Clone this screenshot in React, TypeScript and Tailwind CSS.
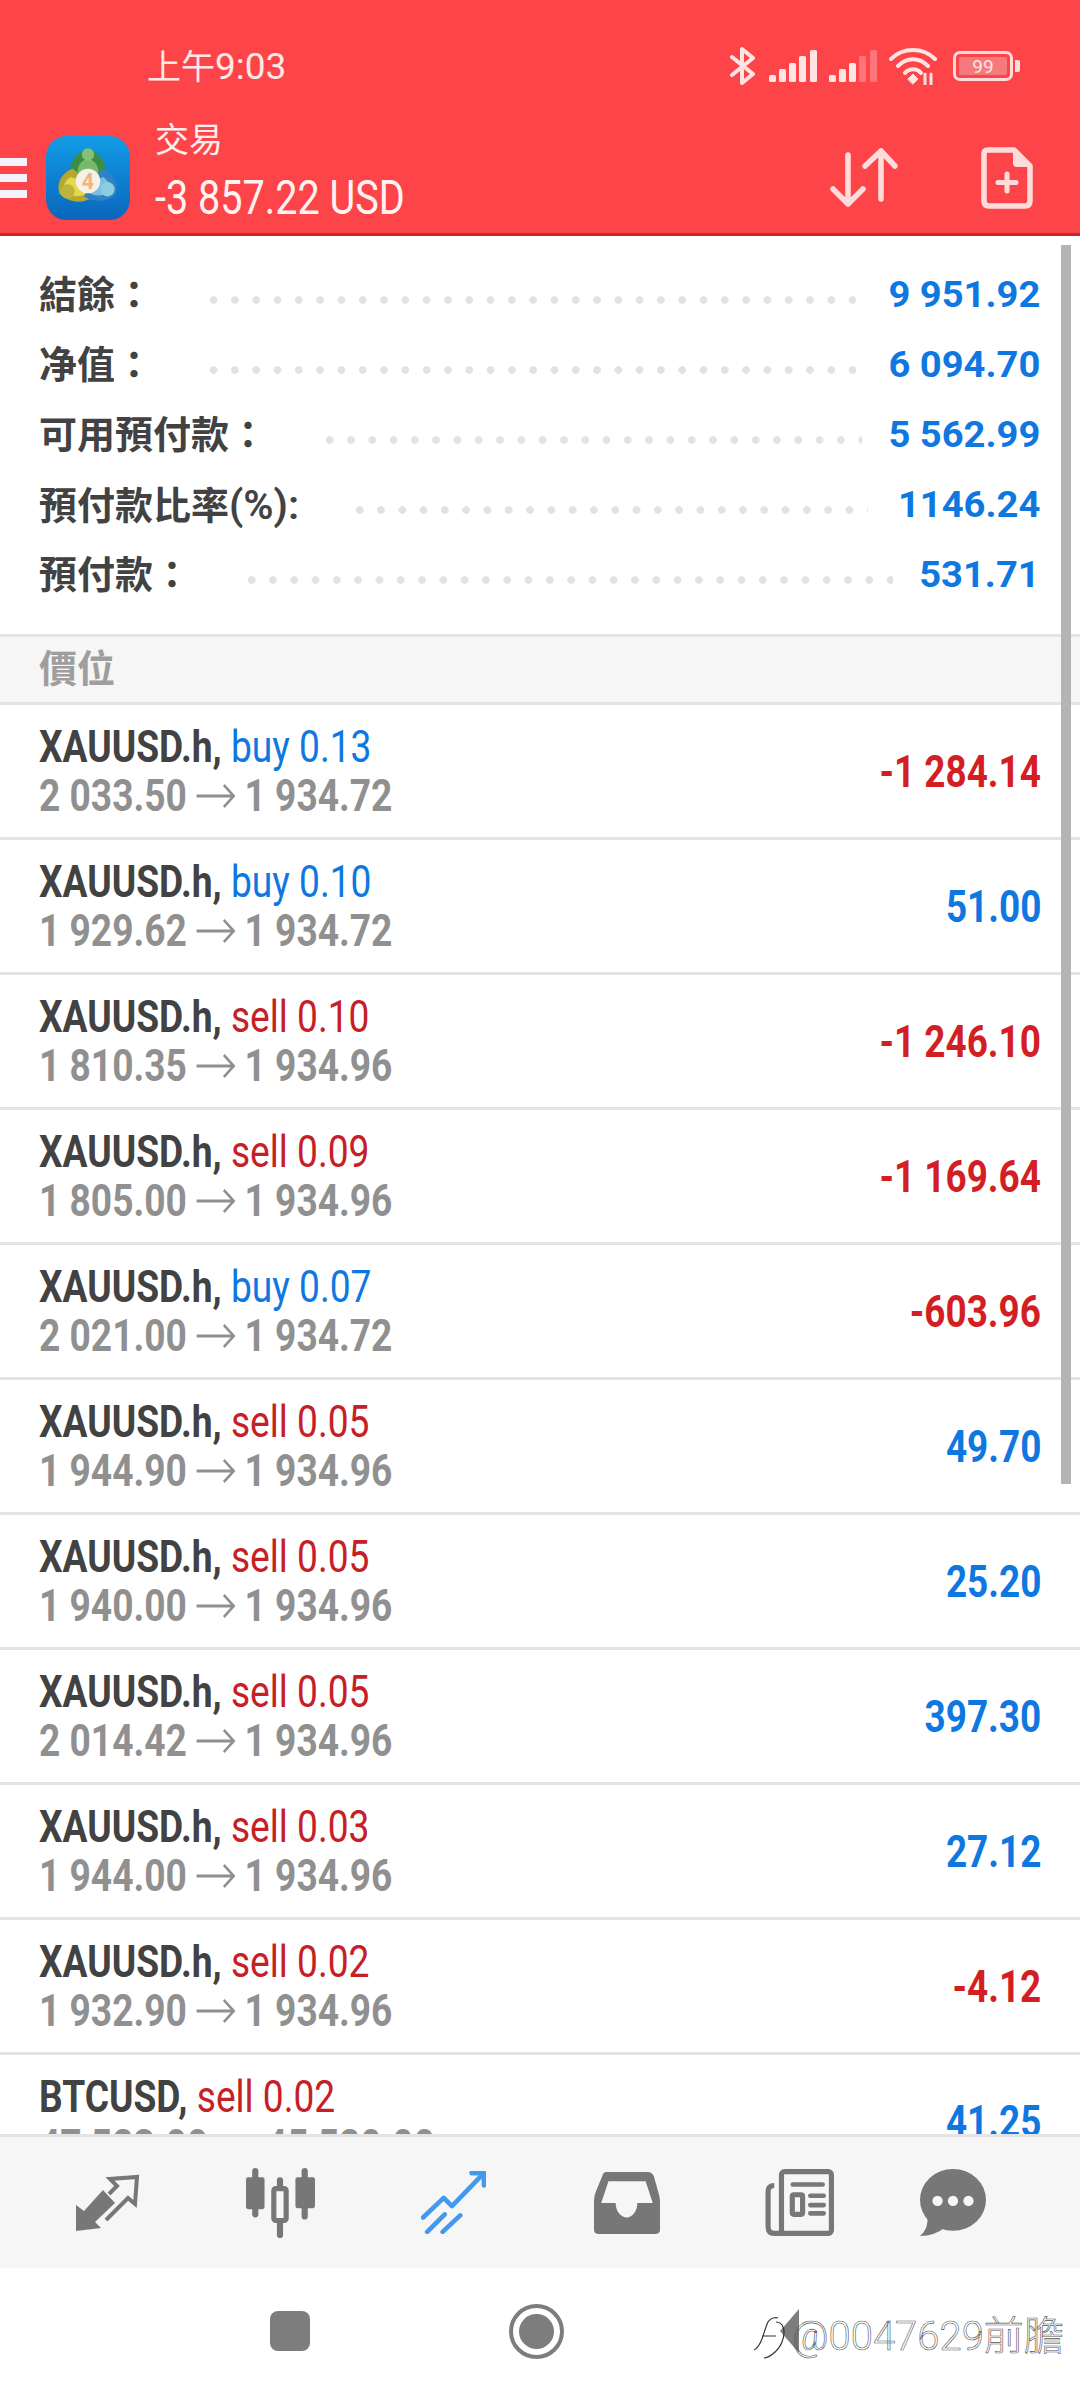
const font = "font-['Roboto','Noto_Sans_CJK_TC',sans-serif]";

const summary = [
  { label: "結餘：", value: "9 951.92", left: "ml-[50px]", right: "mr-[41px]" },
  { label: "净值：", value: "6 094.70", left: "ml-[50px]", right: "mr-[41px]" },
  { label: "可用預付款：", value: "5 562.99", left: "ml-[52px]", right: "mr-[35px]" },
  { label: "預付款比率", suffix: "(%):", value: "1146.24", left: "ml-[50px]", right: "mr-[38px]" },
  { label: "預付款：", value: "531.71", left: "ml-[50px]", right: "mr-[33px]" },
];

const positions = [
  { sym: "XAUUSD.h,", side: "buy", vol: "0.13", from: "2 033.50", to: "1 934.72", pl: "-1 284.14" },
  { sym: "XAUUSD.h,", side: "buy", vol: "0.10", from: "1 929.62", to: "1 934.72", pl: "51.00" },
  { sym: "XAUUSD.h,", side: "sell", vol: "0.10", from: "1 810.35", to: "1 934.96", pl: "-1 246.10" },
  { sym: "XAUUSD.h,", side: "sell", vol: "0.09", from: "1 805.00", to: "1 934.96", pl: "-1 169.64" },
  { sym: "XAUUSD.h,", side: "buy", vol: "0.07", from: "2 021.00", to: "1 934.72", pl: "-603.96" },
  { sym: "XAUUSD.h,", side: "sell", vol: "0.05", from: "1 944.90", to: "1 934.96", pl: "49.70" },
  { sym: "XAUUSD.h,", side: "sell", vol: "0.05", from: "1 940.00", to: "1 934.96", pl: "25.20" },
  { sym: "XAUUSD.h,", side: "sell", vol: "0.05", from: "2 014.42", to: "1 934.96", pl: "397.30" },
  { sym: "XAUUSD.h,", side: "sell", vol: "0.03", from: "1 944.00", to: "1 934.96", pl: "27.12" },
  { sym: "XAUUSD.h,", side: "sell", vol: "0.02", from: "1 932.90", to: "1 934.96", pl: "-4.12" },
  { sym: "BTCUSD,", side: "sell", vol: "0.02", from: "47 523.00", to: "45 520.00", pl: "41.25" },
];

function SignalBars({ faded }: { faded?: boolean }) {
  return (
    <svg width="48" height="32" viewBox="0 0 48 32" fill="#ffe4e4">
      <rect x="0" y="25" width="7" height="7" rx="1.5" />
      <rect x="10" y="19" width="7" height="13" rx="1.5" />
      <rect x="20" y="13" width="7" height="19" rx="1.5" />
      <rect x="30" y="6" width="7" height="26" rx="1.5" opacity={faded ? 0.3 : 1} />
      <rect x="41" y="0" width="7" height="32" rx="1.5" opacity={faded ? 0.3 : 1} />
    </svg>
  );
}

function StatusIcons() {
  return (
    <div className="flex items-center">
      <svg width="26" height="40" viewBox="0 0 26 40" fill="none" stroke="#ffe4e4" strokeWidth="4" strokeLinejoin="round" strokeLinecap="round">
        <path d="M2 11 L23 28 L12 37 V3 L23 12 L2 29" />
      </svg>
      <div className="ml-[13px]"><SignalBars /></div>
      <div className="ml-[12px]"><SignalBars faded /></div>
      <svg className="ml-[12px]" width="48" height="38" viewBox="0 0 48 38" fill="none" stroke="#ffe4e4" strokeLinecap="round">
        <path d="M2 12 C14 0 34 0 46 12" strokeWidth="4" />
        <path d="M9 19 C18 10 30 10 39 19" strokeWidth="4" />
        <path d="M16 26 C20 21 28 21 32 26" strokeWidth="4" />
        <path d="M19 32 L24 27 L29 32 L24 37 Z" fill="#ffe4e4" strokeWidth="1" />
        <path d="M36 27 V37 M42 27 V37" strokeWidth="3" />
      </svg>
      <div className="ml-[16px] flex items-center">
        <div className="flex h-[30px] w-[60px] items-center rounded-[7px] border-[3px] border-[#ffdcdc] p-[3px]">
          <div className="flex h-full w-full items-center justify-center rounded-[2px] bg-[#f47a7d] text-[19px] leading-none text-[#ffe4e4]">
            99
          </div>
        </div>
        <div className="ml-[2px] h-[12px] w-[5px] rounded-r-[2px] bg-[#ffdcdc]" />
      </div>
    </div>
  );
}

function Mt4Logo() {
  return (
    <svg width="84" height="84" viewBox="0 0 82 82" className="shrink-0">
      <defs>
        <linearGradient id="tile" x1="0" y1="0" x2="0" y2="1">
          <stop offset="0" stopColor="#129ce6" />
          <stop offset="1" stopColor="#0a66bb" />
        </linearGradient>
      </defs>
      <rect width="82" height="82" rx="20" fill="url(#tile)" />
      {/* green figure */}
      <path d="M41 13 C53 16 60 27 58 40 L41 44 L24 40 C22 27 29 16 41 13 Z" fill="#3c8f42" />
      <path d="M41 22 C48 24 52 30 51 37 L41 38 L31 37 C30 30 34 24 41 22 Z" fill="#79b86c" />
      <circle cx="41" cy="18" r="6" fill="#86c274" />
      {/* yellow figure */}
      <path d="M26 32 C15 36 10 46 13 56 C22 66 36 66 46 60 L41 44 Z" fill="#b5a92c" />
      <path d="M24 40 C18 44 16 50 18 55 C25 60 34 60 40 56 L36 44 Z" fill="#e6d84c" />
      <circle cx="21" cy="54" r="7" fill="#bdb53b" />
      {/* blue figure */}
      <path d="M55 32 C66 37 71 47 68 57 C59 65 46 65 37 59 L45 44 Z" fill="#2d83c4" />
      <path d="M56 40 C62 45 64 50 62 55 C56 59 48 59 43 56 L47 44 Z" fill="#7cbde0" />
      <circle cx="60" cy="52" r="7" fill="#8ccde2" />
      <circle cx="41" cy="44" r="12" fill="#f6f1e8" />
      <text x="41" y="52" textAnchor="middle" fontSize="21" fontWeight="700" fontFamily="Roboto" fill="#f2b47a">4</text>
    </svg>
  );
}

function Header() {
  return (
    <header className="flex h-[236px] shrink-0 flex-col border-b-[3px] border-[#c62828] bg-[#fd4549] text-white">
      <div className="flex h-[122px] shrink-0 items-center justify-between pl-[147px] pr-[60px] pt-[10px]">
        <span className="text-[34px] leading-none text-[#ffe8e8]">
          上午<span className="text-[37px]">9:03</span>
        </span>
        <StatusIcons />
      </div>
      <div className="flex flex-1 items-center pr-[47px]">
        <div className="flex w-[27px] flex-col gap-[8px]">
          <div className="h-[8px] bg-[#f3f3ff]" />
          <div className="h-[8px] bg-[#f3f3ff]" />
          <div className="h-[8px] bg-[#f3f3ff]" />
        </div>
        <div className="ml-[19px]"><Mt4Logo /></div>
        <div className="ml-[25px] -mt-[12px] flex flex-1 flex-col gap-[10px]">
          <span className="text-[34px] leading-[42px] text-[#ffecec]">交易</span>
          <span className="inline-block origin-left scale-x-[0.825] text-[48px] leading-[54px] whitespace-nowrap text-[#fff2f2]">
            -3 857.22 USD
          </span>
        </div>
        <svg width="68" height="60" viewBox="0 0 68 60" fill="none" stroke="#ffdcdc" strokeWidth="5.5" strokeLinecap="round" strokeLinejoin="round">
          <path d="M18 7 V56 M3 41 L18 56 L33 41" />
          <path d="M51 51 V3 M35 18 L51 3 L65 18" />
        </svg>
        <svg className="ml-[83px]" width="52" height="62" viewBox="0 0 52 62" fill="none">
          <path d="M7 3 H33 L49 19 V54 Q49 59 44 59 H8 Q3 59 3 54 V7 Q3 3 7 3 Z" stroke="#ffdcdc" strokeWidth="5.5" strokeLinejoin="round" />
          <path d="M32 3 L49 20 H36 Q32 20 32 16 Z" fill="#ffdcdc" />
          <path d="M26 27 V44 M17 35.5 H35" stroke="#ffdcdc" strokeWidth="5" strokeLinecap="round" />
        </svg>
      </div>
    </header>
  );
}

function SummaryRow({ label, suffix, value, left, right }: { label: string; suffix?: string; value: string; left: string; right: string }) {
  return (
    <div className="flex h-[70px] items-center">
      <span className="text-[38px] leading-none font-semibold whitespace-nowrap text-[#424242]">
        {label}
        {suffix && <span className="text-[41px]">{suffix}</span>}
      </span>
      <div className={`${left} ${right} mt-[10px] h-[8px] flex-1 bg-[radial-gradient(circle,#e2e2e2_3.5px,transparent_4px)] bg-[length:21.3px_8px] bg-left`} />
      <span className="origin-right scale-x-[1.06] text-[36px] leading-none font-bold whitespace-nowrap text-[#0f78e0]">{value}</span>
    </div>
  );
}

function PriceArrow() {
  return (
    <svg className="mx-[11px] shrink-0" width="48" height="26" viewBox="0 0 48 26" fill="none" stroke="#909090" strokeWidth="3">
      <path d="M1 13 H45 M34 2 L46 13 L34 24" />
    </svg>
  );
}

function PositionRow({ sym, side, vol, from, to, pl }: (typeof positions)[number]) {
  const sideColor = side === "buy" ? "text-[#0f78e0]" : "text-[#c62026]";
  const plColor = pl.startsWith("-") ? "text-[#d31f24]" : "text-[#0f78e0]";
  return (
    <div className="flex h-[135px] shrink-0 items-center justify-between border-b-[3px] border-[#e4e4e4] pr-[39px] pl-[39px]">
      <div className="flex origin-left scale-x-[0.825] flex-col whitespace-nowrap">
        <div className="text-[45px] leading-[49px]">
          <span className="font-bold text-[#424242]">{sym}</span>{" "}
          <span className={sideColor}>{side} {vol}</span>
        </div>
        <div className="flex items-center text-[45px] leading-[49px] font-bold text-[#909090]">
          {from}
          <PriceArrow />
          {to}
        </div>
      </div>
      <span className={`origin-right scale-x-[0.82] text-[45px] leading-none font-bold whitespace-nowrap ${plColor}`}>{pl}</span>
    </div>
  );
}

function TabBar() {
  return (
    <nav className="grid h-[134px] shrink-0 grid-cols-6 items-center border-t-[3px] border-[#e4e4e4] bg-[#f6f6f6] px-[21px]">
      <div className="flex justify-center">
        <svg width="66" height="60" viewBox="0 0 64 60" fill="none">
          <path d="M0 58 V32 L8 38 L27 17 L39 30 L19 49 L25 55 Z" fill="#777" />
          <path d="M30 47 L52 25 L59 31 L61 4 L34 6 L41 13 L33 21" stroke="#777" strokeWidth="4" />
        </svg>
      </div>
      <div className="flex justify-center">
        <svg width="69" height="70" viewBox="0 0 67 68" fill="#777">
          <rect x="6" y="0" width="6" height="48" rx="3" />
          <rect x="0" y="9" width="18" height="31" rx="2" />
          <rect x="30" y="9" width="6" height="59" rx="3" />
          <rect x="27" y="20" width="12" height="31" rx="2" fill="#f6f6f6" stroke="#777" strokeWidth="5" />
          <rect x="54" y="0" width="6" height="50" rx="3" />
          <rect x="48" y="9" width="19" height="30" rx="2" />
        </svg>
      </div>
      <div className="flex justify-center">
        <svg width="65" height="63" viewBox="0 0 63 61" fill="none" stroke="#4299f0" strokeWidth="4.5" strokeLinecap="round" strokeLinejoin="round">
          <path d="M2 45 L22 26 L30 34 L60 3" />
          <path d="M49 2 H61 V14" />
          <path d="M6 59 L23 42 M21 59 L38 43" />
        </svg>
      </div>
      <div className="flex justify-center">
        <svg width="66" height="62" viewBox="0 0 64 60">
          <path d="M12 0 H52 Q56 0 58 4 L62 18 Q64 24 64 28 V56 Q64 60 60 60 H4 Q0 60 0 56 V28 Q0 22 3 16 L8 4 Q9 0 12 0 Z" fill="#777" />
          <path d="M14 9 H50 L57 30 H42 C42 38 37 44 32 44 C26 44 21 38 21 30 H7 Z" fill="#f6f6f6" />
        </svg>
      </div>
      <div className="flex justify-center">
        <svg width="69" height="67" viewBox="0 0 67 65" fill="none">
          <rect x="16" y="2.5" width="48.5" height="60" rx="3" stroke="#777" strokeWidth="5" />
          <path d="M9 16 Q3 16 3 22 V56 Q3 62.5 9 62.5 H18" stroke="#777" strokeWidth="5" />
          <path d="M27 15 H56 M44 26 H57 M44 35 H57 M44 43 H57" stroke="#777" strokeWidth="4.5" strokeLinecap="round" />
          <rect x="26.5" y="25" width="10" height="19" rx="1.5" stroke="#777" strokeWidth="5" />
        </svg>
      </div>
      <div className="flex justify-center pr-[40px]">
        <svg width="66" height="67" viewBox="0 0 64 65">
          <ellipse cx="32" cy="30" rx="32" ry="30" fill="#777" />
          <path d="M7 44 Q9 58 0 65 Q14 65 24 57 Z" fill="#777" />
          <circle cx="17" cy="31" r="5" fill="#f6f6f6" />
          <circle cx="32" cy="31" r="5" fill="#f6f6f6" />
          <circle cx="47" cy="31" r="5" fill="#f6f6f6" />
        </svg>
      </div>
    </nav>
  );
}

function SystemBar() {
  return (
    <div className="relative flex flex-1 items-start bg-white pt-[36px] pl-[270px]">
      <div className="mt-[7px] h-[40px] w-[40px] rounded-[8px] bg-[#7d7d7d]" />
      <div className="ml-[199px] flex h-[55px] w-[55px] items-center justify-center rounded-full border-[4px] border-[#7d7d7d]">
        <div className="h-[35px] w-[35px] rounded-full bg-[#7d7d7d]" />
      </div>
      <svg className="ml-[216px] mt-[5px]" width="20" height="44" viewBox="0 0 20 44">
        <path d="M19 0 V44 L0 22 Z" fill="#7d7d7d" />
      </svg>
      {/* watermark sits on top of the back button */}
      <div className="absolute top-[46px] left-[752px] flex items-center">
        <svg width="40" height="46" viewBox="0 0 40 46" fill="none" stroke="#333" strokeWidth="1.2">
          <path d="M2 36 C10 32 12 16 16 8 C20 2 26 4 26 4 M10 22 H24 M24 8 C32 8 34 18 30 28 C26 38 16 44 12 44" />
        </svg>
        <span className="text-[40px] leading-none font-light text-transparent [-webkit-text-stroke:0.6px_#555]">
          @0047629前膽
        </span>
      </div>
    </div>
  );
}

export default function App() {
  return (
    <div className={`flex h-[2400px] w-[1080px] flex-col overflow-hidden bg-white ${font}`}>
      <Header />
      <main className="relative flex h-[1898px] shrink-0 flex-col overflow-hidden">
        <section className="flex h-[398px] shrink-0 flex-col justify-center pr-[40px] pl-[39px]">
          {summary.map((row) => (
            <SummaryRow key={row.label} {...row} />
          ))}
        </section>
        <div className="flex h-[71px] shrink-0 items-center border-y-[3px] border-[#e4e4e4] bg-[#f6f6f6] pl-[39px] text-[38px] font-semibold text-[#9e9e9e]">
          價位
        </div>
        {positions.map((p) => (
          <PositionRow key={p.from} {...p} />
        ))}
        {/* scrollbar thumb */}
        <div className="absolute top-[9px] right-[9px] h-[1239px] w-[10px] bg-[#b4b4b4]" />
      </main>
      <TabBar />
      <SystemBar />
    </div>
  );
}
